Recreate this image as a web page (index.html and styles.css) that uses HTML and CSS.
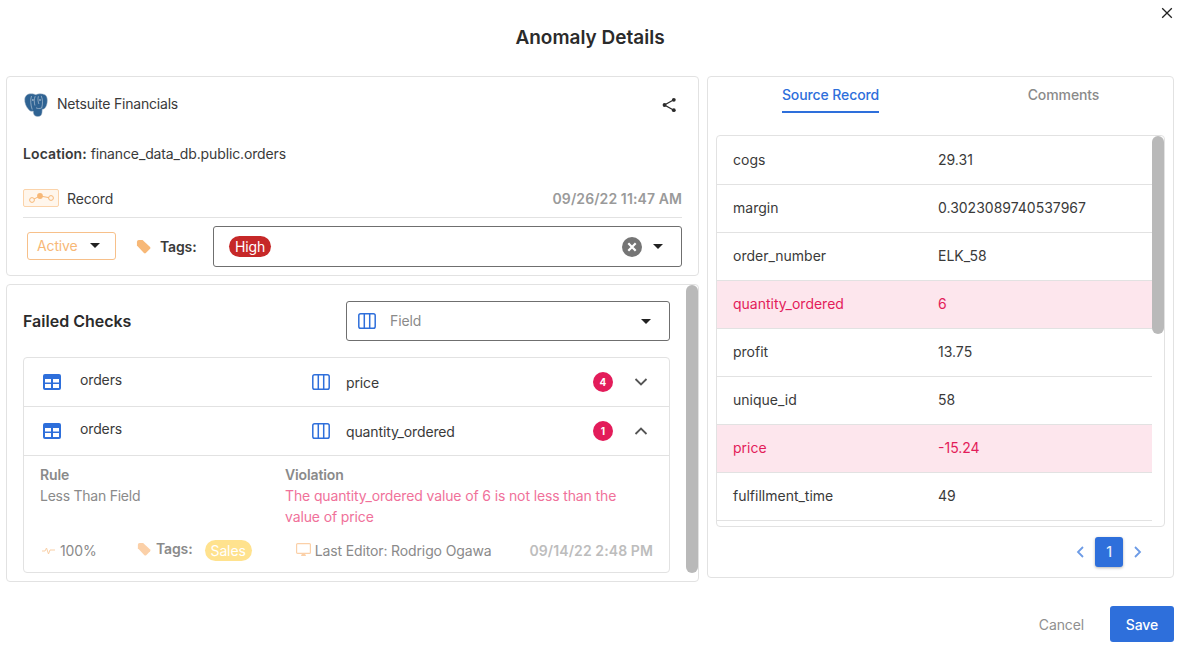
FILE: index.html
```html
<!DOCTYPE html>
<html lang="en">
<head>
<meta charset="utf-8">
<title>Anomaly Details</title>
<link rel="stylesheet" href="styles.css">
</head>
<body>
<div class="modal">
  <button class="close" aria-label="Close"><svg width="12" height="12" viewBox="0 0 12 12"><path d="M1.2 1.2l9.6 9.6M10.8 1.2l-9.6 9.6" stroke="#222" stroke-width="1.3" fill="none"/></svg></button>
  <h1 class="title">Anomaly Details</h1>
  <div class="main">
    <div class="left">
      <section class="card info">
        <div class="source">
          <svg class="pg" width="24" height="24" viewBox="0 0 24 24">
            <path d="M4 1.200C7 .3 10 .8 12 1.800C14 .6 18 .3 21 1.800C23.700 3.600 23.900 8.500 22.500 12.500C21.500 15.200 19.800 16.500 18.300 16.200L18 20C17.700 22.800 15.500 23.900 13 23.500C10.800 23.200 9.500 21.800 9.300 19.500L9.200 18C7.500 18.800 5.500 18 4.200 16C2 13.500 .4 9.500 .7 6C.9 3.800 2.200 2.100 4 1.200Z" fill="#2f6393" stroke="#aebdca" stroke-width=".5"/>
            <path d="M7.500 3C6.200 6.500 6.600 12 8.200 16.500M17.200 2.800C18.900 6.500 18.800 11 17.700 15C15.500 15.800 13.500 15.600 12 14.800M11.200 3.200C9.900 6 10.100 9.500 10.900 12.500M14.400 3.200C13.600 6 14 8.500 14.900 11" stroke="#c7d4df" stroke-width=".6" fill="none"/>
            <circle cx="8.900" cy="7" r=".7" fill="#e8edf2"/>
            <circle cx="16" cy="7" r=".7" fill="#e8edf2"/>
          </svg>
          <span class="source-name">Netsuite Financials</span>
          <svg class="share" width="16" height="16" viewBox="0 0 16 16"><path d="M12.800 2.800L3.500 8l9.300 5.200" stroke="#2b2b2b" stroke-width="1.300" fill="none"/><circle cx="12.800" cy="2.800" r="1.900" fill="#2b2b2b"/><circle cx="3.500" cy="8" r="1.900" fill="#2b2b2b"/><circle cx="12.800" cy="13.200" r="1.900" fill="#2b2b2b"/></svg>
        </div>
        <p class="location"><b>Location:</b> finance_data_db.public.orders</p>
        <div class="type-row">
          <span class="type-icon"><svg width="28" height="12" viewBox="0 0 28 12"><path d="M5 8L13 4L24 6" stroke="#f7b877" stroke-width="1" fill="none"/><circle cx="5" cy="8" r="2.400" fill="#fff6ec" stroke="#f7b877"/><circle cx="13" cy="4" r="2.900" fill="#f7b877"/><circle cx="24" cy="6" r="2.400" fill="#fff6ec" stroke="#f7b877"/></svg></span>
          <span class="type-name">Record</span>
          <span class="stamp">09/26/22 11:47 AM</span>
        </div>
        <div class="status-row">
          <div class="status">Active<i class="caret"></i></div>
          <svg class="tag" width="15" height="15" viewBox="0 0 16 16"><path d="M1 3a2 2 0 0 1 2-2h4l8 7.500a1.500 1.500 0 0 1 0 2L10.500 15a1.500 1.500 0 0 1-2 0L1 7z" fill="#f7b877"/></svg>
          <b class="tags-label">Tags:</b>
          <div class="select tags-select">
            <span class="chip-high">High</span>
            <svg class="clear" width="20" height="20" viewBox="0 0 20 20"><circle cx="10" cy="10" r="10" fill="#757575"/><path d="M6.300 6.300l7.400 7.400M13.700 6.300l-7.400 7.400" stroke="#fff" stroke-width="2.200"/></svg>
            <i class="caret"></i>
          </div>
        </div>
      </section>
      <section class="card checks">
        <div class="checks-body">
          <div class="checks-head">
            <h2>Failed Checks</h2>
            <div class="select field-select">
              <svg class="ic-col" width="18" height="16" viewBox="0 0 18 16"><rect x=".8" y=".8" width="16.400" height="14.400" rx="1.800" fill="none" stroke="#2e6fdb" stroke-width="1.500"/><path d="M6.300 1v14M11.700 1v14" stroke="#2e6fdb" stroke-width="1.500"/></svg>
              <span class="field-ph">Field</span>
              <i class="caret"></i>
            </div>
          </div>
          <div class="list">
            <div class="item">
              <svg class="ic-tbl" width="18" height="16" viewBox="0 0 18 16"><rect width="18" height="16" rx="2" fill="#2e6fdb"/><path d="M2 5h6v3.500H2zM10 5h6v3.500h-6zM2 10h6v4H2zM10 10h6v4h-6z" fill="#fff"/></svg>
              <span class="tbl-name">orders</span>
              <svg class="ic-col" width="18" height="16" viewBox="0 0 18 16"><rect x=".8" y=".8" width="16.400" height="14.400" rx="1.800" fill="none" stroke="#2e6fdb" stroke-width="1.500"/><path d="M6.300 1v14M11.700 1v14" stroke="#2e6fdb" stroke-width="1.500"/></svg>
              <span class="col-name">price</span>
              <span class="count">4</span>
              <svg class="chev" width="14" height="10" viewBox="0 0 14 10"><path d="M1.500 2l5.500 5.500L12.500 2" stroke="#555" stroke-width="1.800" fill="none"/></svg>
            </div>
            <div class="item">
              <svg class="ic-tbl" width="18" height="16" viewBox="0 0 18 16"><rect width="18" height="16" rx="2" fill="#2e6fdb"/><path d="M2 5h6v3.500H2zM10 5h6v3.500h-6zM2 10h6v4H2zM10 10h6v4h-6z" fill="#fff"/></svg>
              <span class="tbl-name">orders</span>
              <svg class="ic-col" width="18" height="16" viewBox="0 0 18 16"><rect x=".8" y=".8" width="16.400" height="14.400" rx="1.800" fill="none" stroke="#2e6fdb" stroke-width="1.500"/><path d="M6.300 1v14M11.700 1v14" stroke="#2e6fdb" stroke-width="1.500"/></svg>
              <span class="col-name">quantity_ordered</span>
              <span class="count">1</span>
              <svg class="chev" width="14" height="10" viewBox="0 0 14 10"><path d="M1.500 8L7 2.500 12.500 8" stroke="#555" stroke-width="1.800" fill="none"/></svg>
            </div>
            <div class="detail">
              <div class="detail-cols">
                <div class="rule"><b>Rule</b><span>Less Than Field</span></div>
                <div class="violation"><b>Violation</b><span>The quantity_ordered value of 6 is not less than the value of price</span></div>
              </div>
              <div class="meta">
                <svg class="pulse" width="13" height="10" viewBox="0 0 13 10"><path d="M0 6h3l1.500-3 2 6 1.500-4h5" stroke="#f9cfa6" stroke-width="1" fill="none"/></svg>
                <span class="pct">100%</span>
                <svg class="tag2" width="14" height="14" viewBox="0 0 16 16"><path d="M1 3a2 2 0 0 1 2-2h4l8 7.500a1.500 1.500 0 0 1 0 2L10.500 15a1.500 1.500 0 0 1-2 0L1 7z" fill="#fbd0a8"/></svg>
                <b class="meta-tags">Tags:</b>
                <span class="chip-sales">Sales</span>
                <svg class="monitor" width="15" height="14" viewBox="0 0 15 14"><rect x=".6" y=".6" width="13.800" height="9.800" rx="1" fill="none" stroke="#fbd0a8" stroke-width="1.200"/><path d="M5 13h5l-1-2.500H6z" fill="#fbd0a8"/></svg>
                <span class="editor">Last Editor: Rodrigo Ogawa</span>
                <b class="stamp2">09/14/22 2:48 PM</b>
              </div>
            </div>
          </div>
        </div>
        <div class="track left-track"><div class="thumb left-thumb"></div></div>
      </section>
    </div>
    <section class="card right">
      <div class="tabs">
        <div class="tab active"><span>Source Record</span></div>
        <div class="tab"><span>Comments</span></div>
      </div>
      <div class="record">
        <div class="rows">
          <div class="row"><span>cogs</span><span>29.31</span></div>
          <div class="row"><span>margin</span><span>0.3023089740537967</span></div>
          <div class="row"><span>order_number</span><span>ELK_58</span></div>
          <div class="row bad"><span>quantity_ordered</span><span>6</span></div>
          <div class="row"><span>profit</span><span>13.75</span></div>
          <div class="row"><span>unique_id</span><span>58</span></div>
          <div class="row bad"><span>price</span><span>-15.24</span></div>
          <div class="row"><span>fulfillment_time</span><span>49</span></div>
        </div>
        <div class="track right-track"><div class="thumb right-thumb"></div></div>
      </div>
      <div class="pager">
        <svg width="8" height="12" viewBox="0 0 8 12"><path d="M7 1L2 6l5 5" stroke="#6c9be6" stroke-width="1.800" fill="none"/></svg>
        <span class="page">1</span>
        <svg width="8" height="12" viewBox="0 0 8 12"><path d="M1 1l5 5-5 5" stroke="#6c9be6" stroke-width="1.800" fill="none"/></svg>
      </div>
    </section>
  </div>
  <div class="footer">
    <button class="cancel">Cancel</button>
    <button class="save">Save</button>
  </div>
</div>
</body>
</html>
```
FILE: styles.css
```css
* { box-sizing: border-box; }
html, body { margin: 0; height: 100%; background: #fff; overflow: hidden; }
body { font-family: Inter, "Liberation Sans", sans-serif; font-size: 14px; letter-spacing: -0.13px; color: #3a3a3a; }
button { font: inherit; letter-spacing: inherit; border: 0; background: none; padding: 0; }
p, h1, h2 { margin: 0; }
.modal { position: relative; width: 1183px; height: 648px; padding: 0 9px 0 6px; }
.close { position: absolute; top: 7px; right: 10px; width: 12px; height: 12px; display: flex; }
.title { height: 76px; padding-top: 26px; text-align: center; font-size: 19px; line-height: 24px; font-weight: 600; letter-spacing: 0; color: #2b2b2b; }
.main { display: flex; gap: 8px; align-items: flex-start; }
.left { width: 693px; display: flex; flex-direction: column; gap: 8px; }
.card { border: 1px solid #e2e2e2; border-radius: 4px; background: #fff; }
.info { height: 200px; padding: 16px 16px 0 16px; }
.source { display: flex; align-items: center; height: 22px; }
.pg { margin-left: 1px; margin-top: 2px; flex: none; }
.source-name { margin-left: 9px; letter-spacing: -0.2px; padding-bottom: 2px; }
.share { margin-left: auto; margin-right: 5px; margin-top: 2px; }
.location { margin-top: 29px; height: 20px; line-height: 20px; }
.location b { font-weight: 600; letter-spacing: 0.1px; }
.type-row { display: flex; align-items: center; height: 29px; margin-top: 25px; border-bottom: 1px solid #e2e2e2; padding-bottom: 10px; }
.type-icon { width: 36px; height: 18px; border: 1px solid #fbd3aa; background: #fff6ec; border-radius: 2px; display: flex; align-items: center; justify-content: center; }
.type-name { margin-left: 8px; }
.stamp { margin-left: auto; font-weight: 600; color: #9a9a9a; letter-spacing: 0.1px; }
.status-row { display: flex; align-items: center; margin-top: 8px; height: 41px; padding-left: 4px; }
.status { width: 89px; height: 28px; margin-bottom: 2px; border: 1px solid #f7c08a; border-radius: 3px; color: #f7b877; padding-left: 9px; display: flex; align-items: center; }
.caret { width: 0; height: 0; border-left: 5px solid transparent; border-right: 5px solid transparent; border-top: 5px solid #222; margin-left: auto; }
.status .caret { margin-right: 15px; }
.tag { margin-left: 20px; flex: none; }
.tags-label { font-weight: 600; margin-left: 9px; width: 53px; }
.select { border: 1px solid #6f6f6f; border-radius: 3px; display: flex; align-items: center; }
.tags-select { width: 469px; height: 41px; padding: 0 18px 0 15px; }
.chip-high { background: #c62828; color: #fff; border-radius: 11px; height: 21px; line-height: 21px; padding: 0 6px; }
.clear { margin-left: auto; }
.tags-select .caret { margin-left: 11px; }
.checks { height: 298px; position: relative; padding: 16px 28px 0 16px; }
.checks-head { display: flex; align-items: center; justify-content: space-between; height: 40px; }
.checks-head h2 { font-size: 16px; font-weight: 600; letter-spacing: 0; color: #2b2b2b; }
.field-select { width: 324px; height: 40px; padding: 0 18px 0 11px; }
.field-ph { margin-left: 14px; margin-bottom: 2px; color: #8a8a8a; }
.list { margin-top: 16px; border: 1px solid #e2e2e2; border-radius: 4px; height: 216px; }
.item { height: 49px; border-bottom: 1px solid #e2e2e2; display: flex; align-items: center; padding-left: 19px; }
.tbl-name { width: 232px; margin-left: 19px; margin-top: -6px; }
.col-name { margin-left: 16px; }
.count { margin-left: auto; width: 20px; height: 20px; border-radius: 50%; background: #e31c5a; color: #fff; font-size: 10px; font-weight: 700; line-height: 20px; text-align: center; letter-spacing: 0; }
.chev { margin: 0 21px 0 21px; }
.detail { padding: 8px 16px 0 16px; color: #8a8a8a; }
.detail-cols { display: flex; line-height: 21px; }
.detail b, .detail-cols span { display: block; }
.rule { width: 245px; }
.rule span { letter-spacing: -0.25px; }
.rule b, .violation b { font-weight: 600; color: #8a8a8a; }
.violation { width: 345px; color: #f0719a; }
.meta { display: flex; align-items: center; margin-top: 12px; height: 22px; }
.pulse { margin-left: 2px; flex: none; }
.pct { margin-left: 5px; width: 77px; }
.tag2 { margin-top: -3px; flex: none; }
.meta-tags { margin-left: 5px; margin-top: -3px; font-weight: 600; }
.chip-sales { margin-left: 12px; background: #ffe28e; color: #fff; border-radius: 11px; height: 21px; line-height: 21px; padding: 0 6px; }
.monitor { margin-left: 44px; flex: none; }
.editor { margin-left: 4px; }
.stamp2 { margin-left: auto; font-weight: 600; color: #bdbdbd; letter-spacing: 0.1px; }
.track { position: absolute; }
.thumb { background: #b9b9b9; border-radius: 6px; width: 100%; }
.left-track { top: 0; right: 0; width: 12px; height: 288px; }
.left-thumb { height: 288px; }
.right { width: 467px; height: 502px; padding: 0 8px; }
.tabs { display: flex; height: 58px; margin-left: -2px; }
.tab { width: 233px; flex: none; text-align: center; padding-top: 9px; color: #8a8a8a; font-weight: 500; letter-spacing: -0.1px; }
.tab span { display: inline-block; height: 27px; line-height: 18px; }
.tab.active span { color: #2e6fdb; border-bottom: 2px solid #2e6fdb; }
.record { position: relative; height: 392px; border: 1px solid #e2e2e2; border-radius: 4px; overflow: hidden; padding-right: 12px; letter-spacing: 0; }
.rows { padding-top: 1px; }
.row { height: 48px; border-bottom: 1px solid #e2e2e2; display: flex; align-items: center; padding: 0 0 3px 16px; }
.row span:first-child { width: 205px; }
.bad { background: #fde6ed; color: #e31c5a; }
.right-track { top: 0; right: 0; width: 12px; height: 100%; }
.right-thumb { height: 198px; }
.pager { display: flex; align-items: center; justify-content: flex-end; gap: 11px; height: 50px; padding: 0 23px 0 0; }
.page { width: 28px; height: 30px; background: #2e6fdb; color: #e6eefb; border-radius: 3px; line-height: 30px; text-align: center; box-shadow: 0 1px 3px rgba(0,0,0,.3); font-weight: 500; }
.footer { display: flex; justify-content: flex-end; align-items: center; margin-top: 24px; }
.cancel { color: #8f8f8f; margin-right: 26px; }
.save { width: 64px; height: 36px; background: #2e6fdb; color: #fff; border-radius: 3px; font-weight: 500; }
```
